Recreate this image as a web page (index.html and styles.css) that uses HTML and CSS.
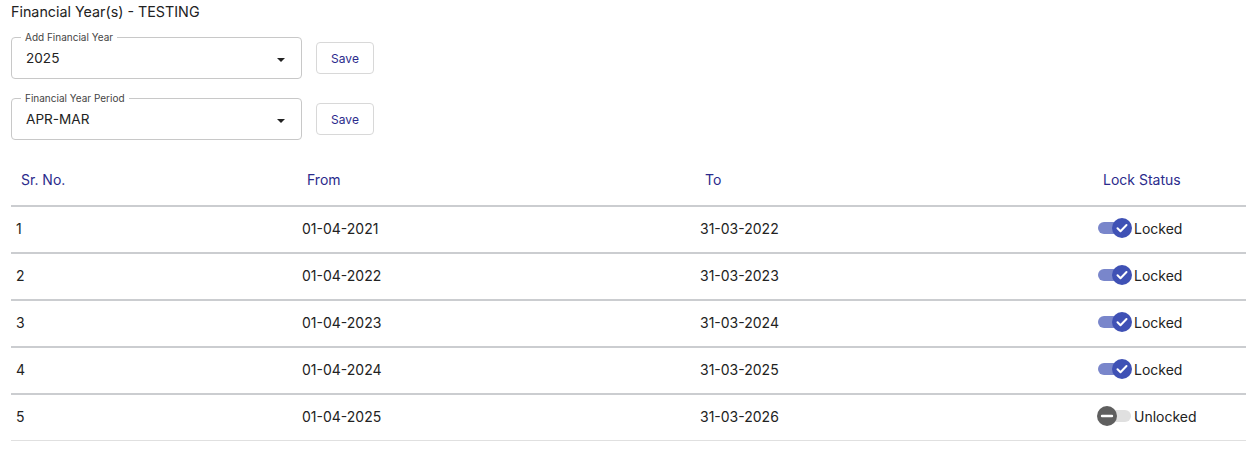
FILE: index.html
```html
<!DOCTYPE html>
<html>
<head>
<meta charset="utf-8">
<link rel="stylesheet" href="styles.css">
</head>
<body>
<div class="page">
  <h1 class="title">Financial Year(s) - TESTING</h1>
  <div class="form-row">
    <div class="field">
      <span class="field-label">Add Financial Year</span>
      <span class="field-value">2025</span>
      <span class="caret"></span>
    </div>
    <button class="btn">Save</button>
  </div>
  <div class="form-row">
    <div class="field">
      <span class="field-label">Financial Year Period</span>
      <span class="field-value">APR-MAR</span>
      <span class="caret"></span>
    </div>
    <button class="btn">Save</button>
  </div>

  <table class="grid">
    <colgroup>
      <col class="c1"><col class="c2"><col class="c3"><col class="c4">
    </colgroup>
    <thead>
      <tr><th>Sr. No.</th><th>From</th><th>To</th><th>Lock Status</th></tr>
    </thead>
    <tbody>
      <tr><td>1</td><td>01-04-2021</td><td>31-03-2022</td><td><span class="status"><span class="toggle on"><span class="thumb"><svg viewBox="0 0 20 20" width="20" height="20"><path d="M5.5 10.2l3 3 6-6.2" fill="none" stroke="#fff" stroke-width="2" stroke-linecap="round" stroke-linejoin="round"/></svg></span></span>Locked</span></td></tr>
      <tr><td>2</td><td>01-04-2022</td><td>31-03-2023</td><td><span class="status"><span class="toggle on"><span class="thumb"><svg viewBox="0 0 20 20" width="20" height="20"><path d="M5.5 10.2l3 3 6-6.2" fill="none" stroke="#fff" stroke-width="2" stroke-linecap="round" stroke-linejoin="round"/></svg></span></span>Locked</span></td></tr>
      <tr><td>3</td><td>01-04-2023</td><td>31-03-2024</td><td><span class="status"><span class="toggle on"><span class="thumb"><svg viewBox="0 0 20 20" width="20" height="20"><path d="M5.5 10.2l3 3 6-6.2" fill="none" stroke="#fff" stroke-width="2" stroke-linecap="round" stroke-linejoin="round"/></svg></span></span>Locked</span></td></tr>
      <tr><td>4</td><td>01-04-2024</td><td>31-03-2025</td><td><span class="status"><span class="toggle on"><span class="thumb"><svg viewBox="0 0 20 20" width="20" height="20"><path d="M5.5 10.2l3 3 6-6.2" fill="none" stroke="#fff" stroke-width="2" stroke-linecap="round" stroke-linejoin="round"/></svg></span></span>Locked</span></td></tr>
      <tr class="last"><td>5</td><td>01-04-2025</td><td>31-03-2026</td><td><span class="status"><span class="toggle off"><span class="thumb"><svg viewBox="0 0 20 20" width="20" height="20"><path d="M5 10h10" fill="none" stroke="#fff" stroke-width="2.4" stroke-linecap="round"/></svg></span></span>Unlocked</span></td></tr>
    </tbody>
  </table>
</div>
</body>
</html>
```
FILE: styles.css
```css
* { box-sizing: border-box; }
body {
  margin: 0;
  background: #fff;
  font-family: Inter, Roboto, "Liberation Sans", sans-serif;
  color: #222;
}
.page { padding: 2px 1px 0 11px; }
.title {
  margin: 0 0 15px 0;
  font-size: 14.3px;
  font-weight: 400;
  line-height: 20px;
  color: #222;
}
.form-row {
  display: flex;
  align-items: center;
  gap: 14px;
  margin-bottom: 19px;
}
.field {
  position: relative;
  width: 291px;
  height: 42px;
  border: 1px solid #c8c8c8;
  border-radius: 4px;
  display: flex;
  align-items: center;
  padding-left: 14px;
}
.field-label {
  position: absolute;
  top: -7px;
  left: 9px;
  padding: 0 4px;
  background: #fff;
  font-size: 10px;
  line-height: 13px;
  color: #444;
}
.field-value {
  font-size: 13.6px;
  color: #222;
}
.caret {
  position: absolute;
  right: 16px;
  top: 20px;
  width: 0;
  height: 0;
  border-left: 4px solid transparent;
  border-right: 4px solid transparent;
  border-top: 4px solid #222;
}
.btn {
  width: 58px;
  height: 32px;
  border: 1px solid #d8d8d8;
  border-radius: 4px;
  background: #fff;
  font-family: Inter, Roboto, "Liberation Sans", sans-serif;
  font-size: 12px;
  color: #2b2b8c;
  padding: 0;
}
.grid {
  width: 1235px;
  border-collapse: collapse;
  margin-top: -9px;
  font-size: 14px;
}
.c1 { width: 286px; }
.c2 { width: 398px; }
.c3 { width: 398px; }
.c4 { width: 153px; }
.grid th {
  text-align: left;
  font-weight: 400;
  color: #2b2b8c;
  height: 56px;
  padding: 3px 10px 0;
  border-bottom: 2px solid #cbcdd0;
}
.grid td {
  height: 47px;
  padding: 0 5px 2px;
  border-bottom: 2px solid #cbcdd0;
  color: #222;
}
.grid tr.last td { height: 46px; border-bottom: 1px solid #e0e0e0; }
.status {
  display: inline-flex;
  align-items: center;
  gap: 3px;
}
.toggle {
  position: relative;
  display: inline-block;
  width: 33px;
  height: 12px;
  border-radius: 6px;
}
.toggle.on { background: #7986cb; }
.toggle.off { background: #e0e0e0; }
.thumb {
  position: absolute;
  top: -4px;
  width: 20px;
  height: 20px;
  border-radius: 50%;
  display: flex;
}
.toggle.on .thumb { right: -1px; background: #3f51b5; }
.toggle.off .thumb { left: -1px; background: #5f5f5f; }
```
